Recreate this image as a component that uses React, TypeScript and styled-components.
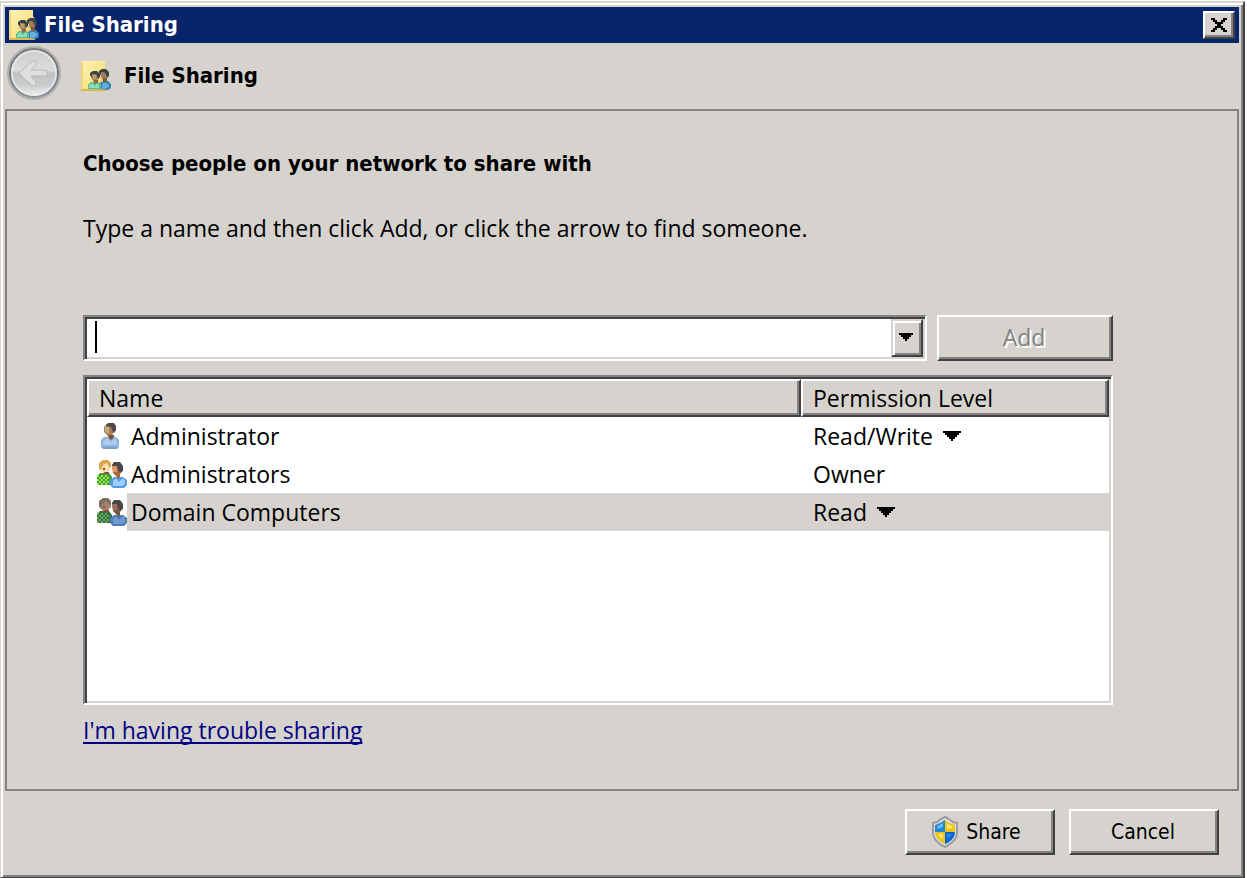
import React, { useState } from "react";
import styled, { createGlobalStyle, css } from "styled-components";

const face = "#d6d3ce";
const shadow = "#848284";
const dark = "#424142";

const GlobalStyle = createGlobalStyle`
  * { box-sizing: border-box; }
  html, body, #root { height: 100%; }
  body {
    margin: 0;
    background: ${face};
    color: #000;
    font: 23px/38px "Open Sans", "Noto Sans", sans-serif;
  }
  button, input, select { font: inherit; color: inherit; }
`;

const raised = css`
  background: ${face};
  border: 2px solid;
  border-color: #fff ${dark} ${dark} #fff;
  box-shadow: inset -2px -2px 0 ${shadow};
`;

const sunken = css`
  background: #fff;
  border: 2px solid;
  border-color: ${shadow} #fff #fff ${shadow};
  box-shadow: inset 2px 2px 0 ${dark}, inset -2px -2px 0 ${face};
`;

const Desktop = styled.div`
  min-height: 100%;
  display: flex;
  background: #fff;
  padding: 1px 2px 0 0;
`;

const Dialog = styled.main`
  flex: 1;
  display: flex;
  flex-direction: column;
  background: ${face};
  border: solid;
  border-width: 2px 2px 1px 1px;
  border-color: ${face} ${dark} ${dark} ${face};
  box-shadow: inset 2px 2px 0 #fff, inset -2px -2px 0 ${shadow};
  padding: 4px;
`;

const TitleBar = styled.header`
  height: 36px;
  display: flex;
  align-items: center;
  gap: 5px;
  padding: 0 4px;
  background: #08246b;
  color: #fff;
`;

const Title = styled.h1`
  flex: 1;
  margin: 0;
  font: bold 22px/36px "DejaVu Sans Condensed", "Noto Sans", sans-serif;
`;

const CloseButton = styled.button`
  ${raised}
  width: 32px;
  height: 28px;
  padding: 0;
  display: grid;
  place-items: center;
`;

const NavBar = styled.nav`
  height: 66px;
  display: flex;
  align-items: center;
  padding: 0 2px 6px;
`;

const BackButton = styled.button`
  width: 54px;
  height: 54px;
  padding: 0;
  border: 0;
  background: none;
  display: grid;
`;

const NavTitle = styled.h2`
  margin: 0;
  display: flex;
  align-items: center;
  gap: 13px;
  padding: 6px 0 0 20px;
  font: bold 22px/32px "DejaVu Sans Condensed", "Noto Sans", sans-serif;
`;

const Panel = styled.section`
  flex: 1;
  border: 2px solid ${shadow};
  padding: 34px 124px 40px 76px;
  display: flex;
  flex-direction: column;
`;

const Heading = styled.h3`
  margin: 0;
  font: bold 22px/38px "DejaVu Sans Condensed", "Noto Sans", sans-serif;
`;

const Hint = styled.label`
  margin: 26px 0 68px;
`;

const AddRow = styled.div`
  display: flex;
  gap: 10px;
  height: 46px;
`;

const Combo = styled.div`
  ${sunken}
  flex: 1;
  min-width: 0;
  display: flex;
  padding: 2px;
`;

const Caret = styled.span`
  width: 2px;
  height: 32px;
  margin: 2px 0 0 8px;
  background: #000;
`;

const NameInput = styled.input`
  flex: 1;
  min-width: 0;
  border: 0;
  outline: 0;
  padding: 0 4px;
  background: none;
`;

const DropButton = styled.button`
  width: 32px;
  height: 38px;
  padding: 0 2px 2px 0;
  display: grid;
  place-items: center;
  background: ${face};
  border: 2px solid;
  border-color: ${face} ${dark} ${dark} ${face};
  box-shadow: inset 2px 2px 0 #fff, inset -2px -2px 0 ${shadow};
`;

const PushButton = styled.button<{ $width: number }>`
  ${raised}
  width: ${(p) => p.$width}px;
  height: 46px;
  padding: 0 2px 2px 0;
  display: flex;
  align-items: center;
  justify-content: center;
  gap: 7px;
  &:disabled {
    color: ${shadow};
    text-shadow: 2px 2px 0 #fff;
  }
`;

const CommandButton = styled(PushButton)<{ $icon?: boolean }>`
  padding: 0 ${(p) => (p.$icon ? 8 : 2)}px 0 0;
  font: 21px/38px "DejaVu Sans Condensed", "Noto Sans", sans-serif;
`;

const ListBox = styled.div`
  ${sunken}
  flex: 1;
  min-height: 320px;
  margin-top: 14px;
  padding: 2px;
`;

const List = styled.table`
  width: 100%;
  table-layout: fixed;
  border-collapse: separate;
  border-spacing: 0;
`;

const HeadCell = styled.th<{ $width?: number }>`
  ${raised}
  width: ${(p) => (p.$width ? `${p.$width}px` : "auto")};
  height: 38px;
  padding: 0 10px;
  font-weight: normal;
  line-height: 34px;
  text-align: left;
`;

const NameCell = styled.td<{ $selected: boolean }>`
  height: 38px;
  padding: 0 0 0 10px;
  background: ${(p) => (p.$selected ? `linear-gradient(${face}, ${face}) 40px 0 no-repeat` : "none")};
`;

const Person = styled.div`
  display: flex;
  align-items: center;
  gap: 4px;
`;

const LevelCell = styled.td<{ $selected: boolean }>`
  height: 38px;
  padding: 0 12px;
  background: ${(p) => (p.$selected ? face : "none")};
`;

const LevelPicker = styled.div`
  display: flex;
  align-items: center;
  gap: 10px;
`;

const LevelSelect = styled.select`
  appearance: none;
  field-sizing: content;
  height: 38px;
  padding: 0;
  border: 0;
  background: none;
`;

const HelpLink = styled.a`
  align-self: flex-start;
  margin-top: 6px;
  color: #000084;
  text-underline-offset: 3px;
  text-decoration-thickness: 2px;
  text-decoration-skip-ink: none;
`;

const Footer = styled.footer`
  height: 82px;
  display: flex;
  justify-content: flex-end;
  gap: 14px;
  padding: 18px 20px 0;
`;

function DownArrow({ wide = false }: { wide?: boolean }) {
  return wide ? (
    <svg width="18" height="10" viewBox="0 0 9 5" shapeRendering="crispEdges" aria-hidden="true">
      <path d="M0 0h9v1h-1v1h-1v1h-1v1h-1v1h-1v-1h-1v-1h-1v-1h-1v-1h-1z" />
    </svg>
  ) : (
    <svg width="14" height="8" viewBox="0 0 7 4" shapeRendering="crispEdges" aria-hidden="true">
      <path d="M0 0h7v1h-1v1h-1v1h-1v1h-1v-1h-1v-1h-1v-1h-1z" />
    </svg>
  );
}

function FolderIcon({ id }: { id: string }) {
  return (
    <svg width="30" height="30" viewBox="0 0 30 30" aria-hidden="true">
      <defs>
        <linearGradient id={id} x1="0" y1="0" x2="1" y2="1">
          <stop offset="0" stopColor="#fff3b8" />
          <stop offset="0.55" stopColor="#fbe48a" />
          <stop offset="1" stopColor="#e9bc50" />
        </linearGradient>
      </defs>
      <path d="M0 0H24V6L26 9V30H0Z" fill={`url(#${id})`} />
      <path d="M0 0H2V30H0Z" fill="#f5d57a" />
      <path d="M0 28H26V30H0Z" fill="#e3b452" />
      <path d="M19 28V22L22 20H27L30 23V27L27 29Z" fill="#3b82b4" />
      <path d="M21 23L24 21L28 24V26L24 28H21Z" fill="#63b0de" />
      <path d="M19 12L21 9H26L27 12L26 17L24 20L21 18Z" fill="#a47b55" />
      <path d="M22 17H26V20L24 22L22 20Z" fill="#7e5a3c" />
      <path d="M18 12V10L21 8H25L28 11V15L26 17L25 13L23 11H20V14Z" fill="#39434a" />
      <path d="M7 28V24L10 21H17L20 23V28Z" fill="#5cba92" />
      <path d="M8 25L11 22L14 25L16 22L18 24V27H8Z" fill="#86e2b6" />
      <path d="M10 13L12 11H17L18 15L16 20L13 21L11 18Z" fill="#a98059" />
      <path d="M12 14H15V18H12Z" fill="#c19b73" />
      <path d="M9 14V12L12 10H16L19 13V16L17 18L16 14L14 13H11V17Z" fill="#35424a" />
      <path d="M13 19H17V21L15 23L13 22Z" fill="#8d6747" />
    </svg>
  );
}

function UserIcon() {
  return (
    <svg width="30" height="30" viewBox="0 0 30 30" aria-hidden="true">
      <path d="M4 26V19L7 16H19L22 19V26L20 28H6Z" fill="#8fb2dd" />
      <path d="M6 20L10 17L14 21L18 17L20 20V24H6Z" fill="#aacbf2" />
      <path d="M6 26H20V28H6Z" fill="#7f9bbf" />
      <path d="M7 6L10 3H16L18 6V10L15 14V17L13 19L11 16L10 14L7 11Z" fill="#a87e5b" />
      <path d="M8 6H12V12H10L8 10Z" fill="#cfa983" />
      <path d="M9 4L11 2H17L19 5V9L17 12L15 9L14 6L9 5Z" fill="#4f4b4b" />
      <path d="M12 14H17V16L14 19L12 16Z" fill="#79513a" />
    </svg>
  );
}

function GroupIcon({ selected }: { selected: boolean }) {
  const c = selected
    ? { hair: "#7d705e", skin: "#a58270", a: "#34703c", b: "#6cab62", blue: "#4f7cb4", light: "#6d9bd1", face: "#7d573f", cheek: "#9a7058" }
    : { hair: "#dba74e", skin: "#ffdca8", a: "#459a33", b: "#92f04e", blue: "#569be2", light: "#9cd0ff", face: "#a9683a", cheek: "#e09a60" };
  return (
    <svg width="30" height="30" viewBox="0 0 30 30" aria-hidden="true">
      <path d="M0 17L3 14H12L15 18V26H0Z" fill={c.a} />
      {[16, 20].map((y) => (
        <path
          key={y}
          d={`M0 ${y}h2v2h-2zM4 ${y}h2v2h-2zM8 ${y}h2v2h-2zM2 ${y + 2}h2v2h-2zM6 ${y + 2}h2v2h-2zM10 ${y + 2}h2v2h-2z`}
          fill={c.b}
        />
      ))}
      <path d="M0 24h2v2h-2zM4 24h2v2h-2zM8 24h2v2h-2z" fill={c.b} />
      <path d="M2 6L5 2H11L14 5V10L10 14H6L3 11Z" fill={c.skin} />
      <path d="M2 10V4L6 1H11L14 4V8H12L10 4L7 5L5 8L4 11Z" fill={c.hair} />
      <path d="M6 9H8V11H6ZM7 13H12V15H8Z" fill="#8a5130" />
      <path d="M13 26V21L17 18H26L30 21V26L27 29H16Z" fill={c.blue} />
      <path d="M16 22L19 19L22 23L26 19L28 22V25L25 27H16Z" fill={c.light} />
      <path d="M15 6L18 3H22L25 6V12L23 15V18L21 20L19 17L16 14Z" fill={c.face} />
      <path d="M15 7H20V13H16Z" fill={c.cheek} />
      <path d="M15 6L17 3H23L26 7V12L23 14L21 10L20 7H15Z" fill="#46464b" />
    </svg>
  );
}

function ShieldIcon() {
  return (
    <svg width="28" height="32" viewBox="0 0 28 32" aria-hidden="true">
      <path
        d="M14 1L18 3L22 6L26 7V17C26 23 20 28 14 31C8 28 2 23 2 17V7L6 6L10 3Z"
        fill="#dedede"
        stroke="#9b9ba0"
        strokeWidth="2"
      />
      <path d="M14 4V16H4V9L9 7Z" fill="#2288d2" />
      <path d="M14 4L19 7L24 9V16H14Z" fill="#ecc61f" />
      <path d="M4 16H14V28C9 26 4 22 4 16Z" fill="#e8c424" />
      <path d="M14 16H24C24 22 19 26 14 28Z" fill="#0a68d0" />
      <path d="M6 10L12 7V11L7 13Z" fill="#66bcee" />
      <path d="M16 8L21 10V12L16 13Z" fill="#ffe978" />
      <path d="M7 18H12V22L9 22Z" fill="#ffe45f" />
      <path d="M16 18H21L17 23Z" fill="#278ef0" />
    </svg>
  );
}

function BackIcon() {
  return (
    <svg width="54" height="54" viewBox="0 0 54 54" aria-hidden="true">
      <defs>
        <linearGradient id="backFill" x1="0" y1="0" x2="0" y2="1">
          <stop offset="0" stopColor="#c9cbcc" />
          <stop offset="0.45" stopColor="#dcddde" />
          <stop offset="0.5" stopColor="#bfc1c3" />
          <stop offset="0.75" stopColor="#c9cbcc" />
          <stop offset="1" stopColor="#f3f3f3" />
        </linearGradient>
        <linearGradient id="backRim" x1="0" y1="0" x2="0" y2="1">
          <stop offset="0" stopColor="#77797c" />
          <stop offset="0.5" stopColor="#70777c" />
          <stop offset="1" stopColor="#89939b" />
        </linearGradient>
      </defs>
      <circle cx="27" cy="27" r="26" fill="none" stroke="#b0afad" strokeWidth="2" />
      <circle cx="27" cy="27" r="24" fill="url(#backFill)" stroke="url(#backRim)" strokeWidth="2" />
      <circle cx="27" cy="27" r="22" fill="none" stroke="#ececec" strokeWidth="2" opacity="0.7" />
      <path d="M12 27L25 15H29V19L24 24H40V30H24L29 36V40H25Z" fill="#dedede" stroke="#b7b8b9" strokeWidth="1" />
    </svg>
  );
}

type Row = { name: string; kind: "user" | "group"; level: string; editable: boolean; selected: boolean };

const rows: Row[] = [
  { name: "Administrator", kind: "user", level: "Read/Write", editable: true, selected: false },
  { name: "Administrators", kind: "group", level: "Owner", editable: false, selected: false },
  { name: "Domain Computers", kind: "group", level: "Read", editable: true, selected: true },
];

function Level({ row }: { row: Row }) {
  const [level, setLevel] = useState(row.level);
  if (!row.editable) return <>{level}</>;
  return (
    <LevelPicker>
      <LevelSelect
        aria-label={`Permission level for ${row.name}`}
        value={level}
        onChange={(e) => setLevel(e.target.value)}
      >
        <option>Read</option>
        <option>Read/Write</option>
      </LevelSelect>
      <DownArrow wide />
    </LevelPicker>
  );
}

export default function App() {
  return (
    <>
      <GlobalStyle />
      <Desktop>
        <Dialog>
          <TitleBar>
            <FolderIcon id="titleFolder" />
            <Title>File Sharing</Title>
            <CloseButton aria-label="Close">
              <svg width="16" height="14" viewBox="0 0 8 7" shapeRendering="crispEdges" aria-hidden="true">
                <path d="M0 0h2v1h1v1h2v-1h1v-1h2v1h-1v1h-1v1h-1v1h1v1h1v1h1v1h-2v-1h-1v-1h-2v1h-1v1h-2v-1h1v-1h1v-1h1v-1h-1v-1h-1v-1h-1z" />
              </svg>
            </CloseButton>
          </TitleBar>
          <NavBar>
            <BackButton aria-label="Back" disabled>
              <BackIcon />
            </BackButton>
            <NavTitle>
              <FolderIcon id="navFolder" />
              File Sharing
            </NavTitle>
          </NavBar>
          <Panel>
            <Heading>Choose people on your network to share with</Heading>
            <Hint htmlFor="person">Type a name and then click Add, or click the arrow to find someone.</Hint>
            <AddRow>
              <Combo>
                <Caret />
                <NameInput id="person" type="text" />
                <DropButton aria-label="Find someone">
                  <DownArrow />
                </DropButton>
              </Combo>
              <PushButton $width={176} disabled>
                Add
              </PushButton>
            </AddRow>
            <ListBox>
              <List>
                <thead>
                  <tr>
                    <HeadCell>Name</HeadCell>
                    <HeadCell $width={308}>Permission Level</HeadCell>
                  </tr>
                </thead>
                <tbody>
                  {rows.map((row) => (
                    <tr key={row.name}>
                      <NameCell $selected={row.selected}>
                        <Person>
                          {row.kind === "user" ? <UserIcon /> : <GroupIcon selected={row.selected} />}
                          {row.name}
                        </Person>
                      </NameCell>
                      <LevelCell $selected={row.selected}>
                        <Level row={row} />
                      </LevelCell>
                    </tr>
                  ))}
                </tbody>
              </List>
            </ListBox>
            <HelpLink href="#trouble">I'm having trouble sharing</HelpLink>
          </Panel>
          <Footer>
            <CommandButton $width={150} $icon>
              <ShieldIcon />
              Share
            </CommandButton>
            <CommandButton $width={150}>Cancel</CommandButton>
          </Footer>
        </Dialog>
      </Desktop>
    </>
  );
}
